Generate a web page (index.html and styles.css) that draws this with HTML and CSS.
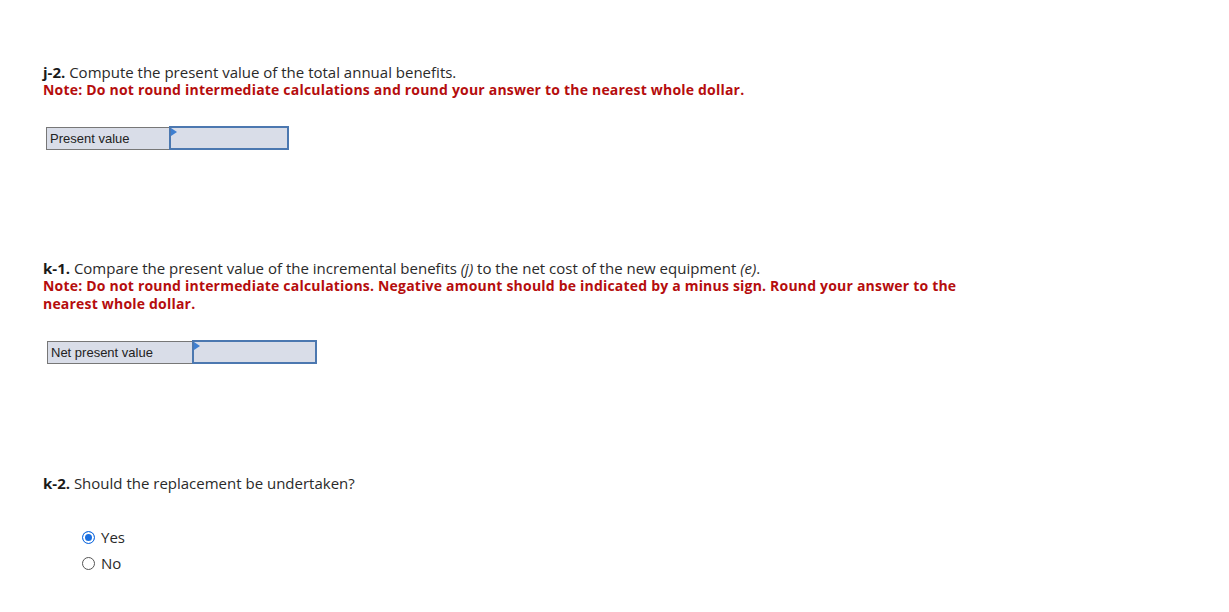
FILE: index.html
```html
<!DOCTYPE html>
<html lang="en">
<head>
    <meta charset="UTF-8">
    <title>Replacement Decision</title>
    <link rel="stylesheet" href="styles.css">
</head>
<body>
    <div class="content">
        <div class="part part-j2">
            <p class="prompt"><b>j-2.</b> Compute the present value of the total annual benefits.</p>
            <p class="note">Note: Do not round intermediate calculations and round your answer to the nearest whole dollar.</p>

            <table class="answer-table present">
                <tr>
                    <td class="label">Present value</td>
                    <td class="entry"><span class="flag"></span></td>
                </tr>
            </table>
        </div>

        <div class="part part-k1">
            <p class="prompt"><b>k-1.</b> Compare the present value of the incremental benefits <i>(j)</i> to the net cost of the new equipment <i>(e)</i>.</p>
            <p class="note">Note: Do not round intermediate calculations. Negative amount should be indicated by a minus sign. Round your answer to the<br>nearest whole dollar.</p>

            <table class="answer-table npv">
                <tr>
                    <td class="label">Net present value</td>
                    <td class="entry"><span class="flag"></span></td>
                </tr>
            </table>
        </div>

        <div class="part part-k2">
            <p class="prompt"><b>k-2.</b> Should the replacement be undertaken?</p>

            <ul class="choices">
                <li><span class="radio checked"></span>Yes</li>
                <li><span class="radio"></span>No</li>
            </ul>
        </div>
    </div>
</body>
</html>
```

FILE: styles.css
```css
body {
    margin: 0;
    padding: 0;
    background-color: #fff;
    font-family: "Open Sans", Arial, sans-serif;
    color: #222;
}

.content {
    padding: 63px 0 0 43px;
}

.prompt,
.note {
    margin: 0;
    line-height: 18px;
}

.prompt {
    font-size: 15px;
    color: #2a2a2a;
}

.prompt b {
    font-weight: 700;
    color: #1a1a1a;
}

.note {
    color: #b50d0d;
    font-size: 14px;
    font-weight: 700;
    letter-spacing: 0.2px;
}

/* answer tables */
.answer-table {
    border-collapse: collapse;
    border: 1px solid #777;
    margin-top: 27px;
    font-family: "Liberation Sans", Arial, sans-serif;
    font-size: 13px;
    color: #222;
}

.answer-table td {
    height: 20px;
    padding: 0;
    background-color: #d9dde8;
}

.answer-table .label {
    padding: 0 4px 0 3px;
    border-right: 1px solid #777;
}

.answer-table .entry {
    position: relative;
    border: 2px solid #4c78b0;
}

.present { margin-left: 3px; }
.present .label { width: 115px; }
.present .entry { width: 116px; }

.npv { margin-left: 4px; }
.npv .label { width: 137px; }
.npv .entry { width: 121px; }

.entry .flag {
    position: absolute;
    top: 0;
    left: 0;
    width: 0;
    height: 0;
    border-top: 4px solid transparent;
    border-bottom: 4px solid transparent;
    border-left: 6px solid #3f7fd0;
}

.part-k1 {
    margin-top: 109px;
}

.part-k2 {
    margin-top: 110px;
}

/* radio choices */
.choices {
    list-style-type: none;
    margin: 32px 0 0 39px;
    padding: 0;
}

.choices li {
    display: flex;
    align-items: center;
    height: 26px;
    font-size: 15px;
    color: #2a2a2a;
}

.radio {
    box-sizing: border-box;
    width: 13px;
    height: 13px;
    border: 1px solid #555;
    border-radius: 50%;
    margin-right: 6px;
    background-color: #fff;
}

.radio.checked {
    border: 1px solid #1a6fe0;
    box-shadow: inset 0 0 0 2px #fff;
    background-color: #1a6fe0;
}
```
